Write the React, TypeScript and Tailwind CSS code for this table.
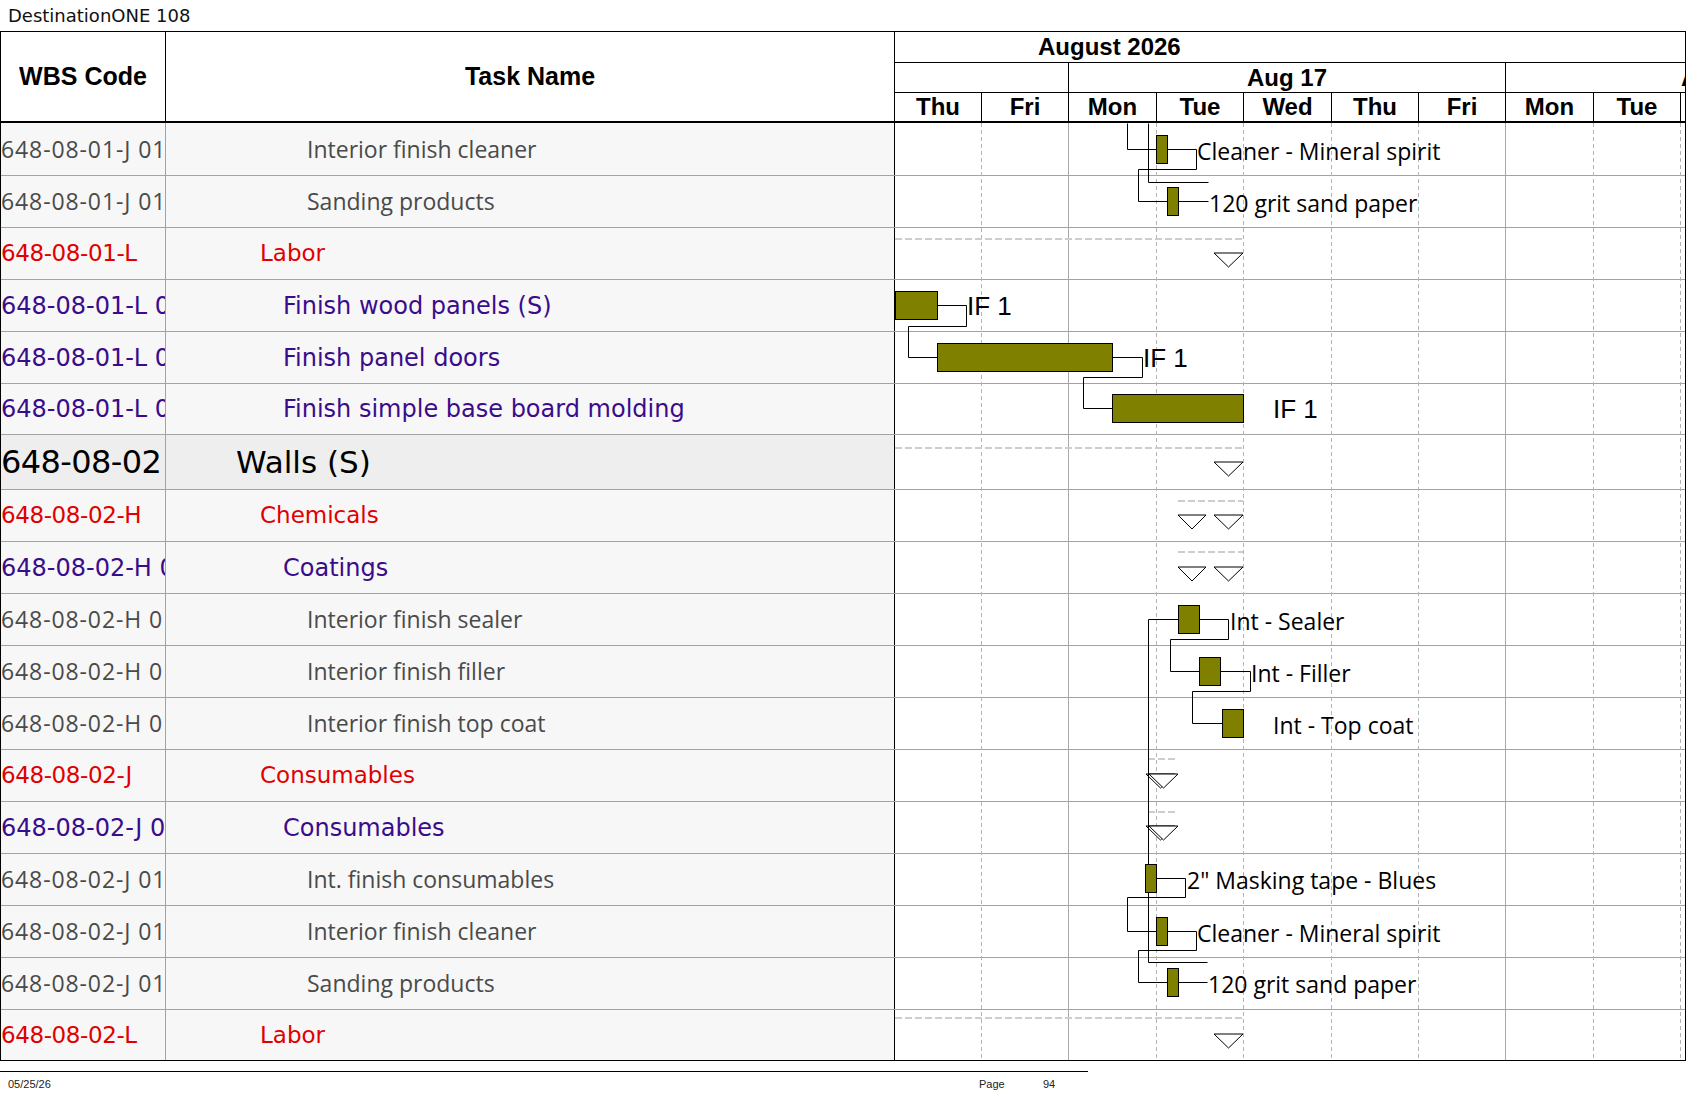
import React from "react";

type Kind = "gray" | "red" | "purple" | "walls";

const ROWS: { kind: Kind; wbs: string; name: string; h: string }[] = [
  { kind: "gray", wbs: "648-08-01-J 01 01", name: "Interior finish cleaner", h: "h-[52px]" },
  { kind: "gray", wbs: "648-08-01-J 01 02", name: "Sanding products", h: "h-[52px]" },
  { kind: "red", wbs: "648-08-01-L", name: "Labor", h: "h-[52px]" },
  { kind: "purple", wbs: "648-08-01-L 01", name: "Finish wood panels (S)", h: "h-[52px]" },
  { kind: "purple", wbs: "648-08-01-L 02", name: "Finish panel doors", h: "h-[52px]" },
  { kind: "purple", wbs: "648-08-01-L 03", name: "Finish simple base board molding", h: "h-[51px]" },
  { kind: "walls", wbs: "648-08-02", name: "Walls (S)", h: "h-[55px]" },
  { kind: "red", wbs: "648-08-02-H", name: "Chemicals", h: "h-[52px]" },
  { kind: "purple", wbs: "648-08-02-H 01", name: "Coatings", h: "h-[52px]" },
  { kind: "gray", wbs: "648-08-02-H 01 01", name: "Interior finish sealer", h: "h-[52px]" },
  { kind: "gray", wbs: "648-08-02-H 01 02", name: "Interior finish filler", h: "h-[52px]" },
  { kind: "gray", wbs: "648-08-02-H 01 03", name: "Interior finish top coat", h: "h-[52px]" },
  { kind: "red", wbs: "648-08-02-J", name: "Consumables", h: "h-[52px]" },
  { kind: "purple", wbs: "648-08-02-J 01", name: "Consumables", h: "h-[52px]" },
  { kind: "gray", wbs: "648-08-02-J 01 01", name: "Int. finish consumables", h: "h-[52px]" },
  { kind: "gray", wbs: "648-08-02-J 01 02", name: "Interior finish cleaner", h: "h-[52px]" },
  { kind: "gray", wbs: "648-08-02-J 01 03", name: "Sanding products", h: "h-[52px]" },
  { kind: "red", wbs: "648-08-02-L", name: "Labor", h: "h-[51px]" },
];

const wbsStyle: Record<Kind, string> = {
  gray: "font-['Open_Sans',sans-serif] text-[23px] tracking-[0.9px] text-[#4a4a4a]",
  red: "font-['DejaVu_Sans',sans-serif] text-[23px] tracking-[-0.4px] text-[#e00000]",
  purple: "font-['DejaVu_Sans',sans-serif] text-[24px] text-[#3a0c8c]",
  walls: "font-['DejaVu_Sans',sans-serif] text-[32px] tracking-[-0.6px] text-black",
};

const nameStyle: Record<Kind, string> = {
  gray: "pl-[141px] font-['Open_Sans',sans-serif] text-[23px] text-[#4a4a4a]",
  red: "pl-[94px] font-['DejaVu_Sans',sans-serif] text-[23px] text-[#e00000]",
  purple: "pl-[117px] font-['DejaVu_Sans',sans-serif] text-[24px] text-[#3a0c8c]",
  walls: "pl-[70px] font-['DejaVu_Sans',sans-serif] text-[31px] text-black",
};

const DAYS = [
  { d: "Thu", w: "w-[87px]" },
  { d: "Fri", w: "w-[87px]" },
  { d: "Mon", w: "w-[88px]" },
  { d: "Tue", w: "w-[87px]" },
  { d: "Wed", w: "w-[88px]" },
  { d: "Thu", w: "w-[87px]" },
  { d: "Fri", w: "w-[87px]" },
  { d: "Mon", w: "w-[88px]" },
  { d: "Tue", w: "w-[87px]" },
];

// gantt geometry in page pixels (svg viewBox matches the page)
const GRID = [981, 1068, 1156, 1243, 1331, 1418, 1505, 1593, 1680];
const WEEK = [1068, 1505];

const BARS: [number, number, number][] = [
  [1156, 1167, 149], [1167, 1178, 201],
  [895, 937, 305], [937, 1112, 357], [1112, 1243, 408],
  [1178, 1199, 619], [1199, 1220, 671], [1222, 1243, 723],
  [1145, 1156, 878], [1156, 1167, 931], [1167, 1178, 982],
];

const LINKS = [
  "1127,123 1127,149 1156,149",
  "1148,123 1148,182 1208,182",
  "1167,149 1196,149 1196,169 1138,169 1138,201 1167,201",
  "1178,201 1208,201",
  "937,305 966,305 966,326 908,326 908,357 937,357",
  "1112,357 1142,357 1142,377 1083,377 1083,408 1112,408",
  "1178,619 1148,619 1148,962 1207,962",
  "1199,619 1228,619 1228,639 1170,639 1170,671 1199,671",
  "1220,671 1250,671 1250,691 1192,691 1192,723 1222,723",
  "1156,878 1185,878 1185,897 1127,897 1127,931 1156,931",
  "1167,931 1196,931 1196,950 1138,950 1138,982 1167,982",
  "1178,982 1207,982",
];

const LABELS: [number, number, string][] = [
  [1197, 149, "Cleaner - Mineral spirit"],
  [1209, 201, "120 grit sand paper"],
  [1230, 619, "Int - Sealer"],
  [1251, 671, "Int - Filler"],
  [1273, 723, "Int - Top coat"],
  [1187, 878, '2" Masking tape - Blues'],
  [1197, 931, "Cleaner - Mineral spirit"],
  [1208, 982, "120 grit sand paper"],
];

const IF_LABELS: [number, number][] = [[967, 305], [1143, 357], [1273, 408]];

const SUMMARIES: [number, number, number][] = [
  [895, 1243, 239], [895, 1243, 448], [1178, 1243, 501], [1178, 1243, 552],
  [1148, 1178, 759], [1148, 1178, 812], [895, 1243, 1018],
];

const TRIANGLES: [number, number, number][] = [
  [1214, 1243, 253], [1214, 1243, 462],
  [1178, 1206, 515], [1214, 1243, 515],
  [1178, 1206, 567], [1214, 1243, 567],
  [1146, 1175, 774], [1149, 1178, 774],
  [1146, 1175, 826], [1149, 1178, 826],
  [1214, 1243, 1034],
];

function GanttLayer() {
  return (
    <svg
      className="pointer-events-none absolute left-[894px] top-0"
      width={790}
      height={937}
      viewBox="895 123 790 937"
    >
      {/* day grid */}
      {GRID.map((x) =>
        WEEK.includes(x) ? (
          <line key={x} x1={x + 0.5} x2={x + 0.5} y1={123} y2={1060} stroke="#a9a9a9" strokeWidth={1} />
        ) : (
          <line key={x} x1={x + 0.5} x2={x + 0.5} y1={123} y2={1060} stroke="#b4b4b4" strokeWidth={1} strokeDasharray="4 3" />
        )
      )}

      {/* summary spans */}
      {SUMMARIES.map(([a, b, y], i) => (
        <line key={i} x1={a} x2={b} y1={y} y2={y} stroke="#cdcdcd" strokeWidth={2} strokeDasharray="7 3" />
      ))}
      {TRIANGLES.map(([a, b, y], i) => (
        <polygon
          key={i}
          points={`${a},${y} ${b},${y} ${(a + b) / 2},${y + 14}`}
          fill="white"
          stroke="black"
          strokeWidth={1}
        />
      ))}

      {/* links */}
      {LINKS.map((p, i) => (
        <polyline
          key={i}
          points={p.split(" ").map((pt) => pt.split(",").map((n) => Number(n) + 0.5).join(",")).join(" ")}
          fill="none"
          stroke="black"
          strokeWidth={1}
        />
      ))}

      {/* bars */}
      {BARS.map(([a, b, cy], i) => (
        <rect key={i} x={a + 0.5} y={cy - 14 + 0.5} width={b - a} height={28} fill="#808000" stroke="black" strokeWidth={1} />
      ))}

      {LABELS.map(([x, cy, t], i) => (
        <text key={i} x={x} y={cy + 10.5} className="font-['Open_Sans',sans-serif] text-[23px]" fill="#000">
          {t}
        </text>
      ))}
      {IF_LABELS.map(([x, cy], i) => (
        <text key={i} x={x} y={cy + 10} className="font-['Liberation_Sans',sans-serif] text-[26px]" fill="#000">
          IF 1
        </text>
      ))}
    </svg>
  );
}

export default function App() {
  return (
    <div className="w-[1687px] h-[1097px] bg-white overflow-hidden">
      {/* title */}
      <div className="h-[31px] pl-[8px] flex items-center font-['DejaVu_Sans',sans-serif] text-[18px] text-[#111]">
        DestinationONE 108
      </div>

      <div className="w-[1686px] border border-black">
        {/* header */}
        <div className="flex h-[91px] border-b-2 border-black font-['Liberation_Sans',sans-serif] font-bold text-black">
          <div className="w-[165px] shrink-0 border-r border-black flex items-center justify-center text-[25px]">
            WBS Code
          </div>
          <div className="w-[729px] shrink-0 border-r border-black flex items-center justify-center text-[25px]">
            Task Name
          </div>
          <div className="flex-1 flex flex-col min-w-0">
            <div className="h-[31px] border-b border-black flex items-center pl-[143px] text-[24px] leading-none">
              August 2026
            </div>
            <div className="h-[30px] border-b border-black flex text-[24px] leading-none">
              <div className="w-[174px] shrink-0 border-r border-black" />
              <div className="w-[437px] shrink-0 border-r border-black flex items-center justify-center">Aug 17</div>
              <div className="flex-1 overflow-hidden whitespace-nowrap flex items-center pl-[175px]">Aug 24</div>
            </div>
            <div className="flex-1 flex text-[24px] leading-none">
              {DAYS.map((d, i) => (
                <div key={i} className={`${d.w} shrink-0 border-r border-black flex items-center justify-center pb-[1px]`}>
                  {d.d}
                </div>
              ))}
              <div className="flex-1" />
            </div>
          </div>
        </div>

        {/* body */}
        <div className="relative">
          {ROWS.map((r, i) => (
            <div key={i} className={`flex ${r.h} ${i > 0 ? "border-t border-[#a3a3a3]" : ""}`}>
              <div
                className={`w-[165px] shrink-0 border-r border-[#a3a3a3] overflow-hidden whitespace-nowrap flex items-center ${
                  r.kind === "walls" ? "bg-[#eeeeee]" : "bg-[#f7f7f7]"
                }`}
              >
                <span className={wbsStyle[r.kind]}>{r.wbs}</span>
              </div>
              <div
                className={`w-[729px] shrink-0 border-r border-black flex items-center whitespace-nowrap ${
                  r.kind === "walls" ? "bg-[#eeeeee]" : "bg-[#f7f7f7]"
                } ${nameStyle[r.kind]}`}
              >
                {r.name}
              </div>
              <div className="flex-1 bg-white" />
            </div>
          ))}
          <GanttLayer />
        </div>
      </div>

      {/* page footer */}
      <div className="mt-[10px] w-[1088px] border-t border-black flex items-center h-[25px] font-['Liberation_Sans',sans-serif] text-[11px] text-[#222]">
        <span className="w-[979px] pl-[8px]">05/25/26</span>
        <span className="w-[64px]">Page</span>
        <span>94</span>
      </div>
    </div>
  );
}
